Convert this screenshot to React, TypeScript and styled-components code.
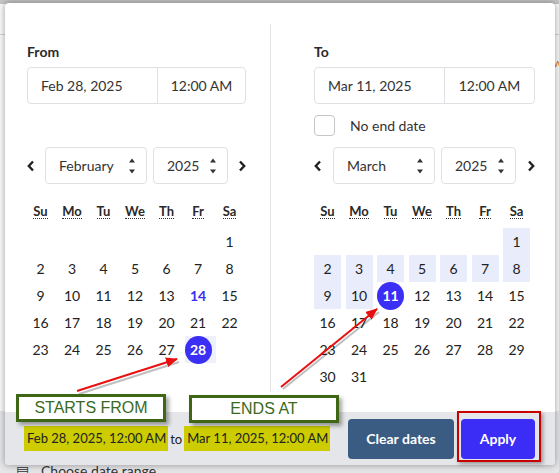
import { FC } from 'react';
import styled, { createGlobalStyle, css } from 'styled-components';

type DayKind = 'normal' | 'today' | 'range' | 'start' | 'end';

interface IcalendarProps {
  label: string;
  dateText: string;
  month: string;
  offset: number;
  days: number;
  kindOf: (day: number) => DayKind;
  showNoEnd?: boolean;
}

const GlobalStyle = createGlobalStyle`
  html, body {
    margin: 0;
    padding: 0;
  }
  body {
    font-family: Lato, "Noto Sans", sans-serif;
    color: #222;
    background: #f3f3f4;
  }
`;

const Screen = styled.div`
  position: relative;
  width: 559px;
  height: 473px;
  overflow: hidden;
  display: flex;
  flex-direction: column;
`;

/* page behind the popover */
const TopStrip = styled.div`
  height: 4px;
  background: #c5c5c8;
`;
const PageArea = styled.div`
  flex: 1;
  display: flex;
  flex-direction: column;
  background: #fbfbfb;
`;
const PageHeader = styled.div`
  height: 30px;
  border-bottom: 1px solid #d4d4d6;
`;
const PageRow = styled.div`
  flex: 1;
  padding: 20px 0 0 553px;
  color: #d47a1d;
  font-size: 12px;
`;
const PageFooter = styled.div`
  height: 62px;
  display: flex;
  align-items: flex-end;
  gap: 12px;
  padding: 0 0 0 16px;
  background: #e6e6e9;
  font-size: 14px;
  color: #333;
`;
const FieldText = styled.span`
  line-height: 14px;
  margin-bottom: -5px;
  white-space: nowrap;
`;

/* popover */
const Popover = styled.div`
  position: absolute;
  top: 3px;
  left: 5px;
  width: 550px;
  height: 462px;
  display: flex;
  flex-direction: column;
  background: #fff;
  border-radius: 4px;
  box-shadow: 0 0 6px 1px rgba(0, 0, 0, 0.3);
  overflow: hidden;
`;
const Columns = styled.div`
  display: flex;
  padding-top: 21px;
`;
const Column = styled.div<{ $first?: boolean }>`
  box-sizing: border-box;
  padding: 19px 20px 2px 43px;
  flex: 1;
  ${({ $first }) =>
    $first &&
    css`
      flex: 0 0 266px;
      padding: 19px 24px 2px 22px;
      border-right: 1px solid #e4e4e7;
    `}
`;
const FieldLabel = styled.div`
  font-size: 14px;
  font-weight: 700;
  line-height: 18px;
  margin-bottom: 6px;
  color: #2a2a2a;
`;
const InputGroup = styled.div`
  box-sizing: border-box;
  height: 37px;
  display: flex;
  border: 1px solid #dfe0e4;
  border-radius: 4px;
  font-size: 14px;
  color: #333;
`;
const DatePart = styled.div`
  flex: 0 0 130px;
  box-sizing: border-box;
  display: flex;
  align-items: center;
  padding-left: 13px;
  border-right: 1px solid #dfe0e4;
`;
const TimePart = styled.div`
  flex: 1;
  display: flex;
  align-items: center;
  justify-content: center;
`;
const CheckRow = styled.label<{ $placeholder?: boolean }>`
  height: 21px;
  margin-top: 11px;
  display: flex;
  align-items: center;
  gap: 15px;
  font-size: 14px;
  color: #333;
  visibility: ${({ $placeholder }) => ($placeholder ? 'hidden' : 'visible')};
`;
const CheckBox = styled.span`
  box-sizing: border-box;
  width: 21px;
  height: 21px;
  border: 1px solid #c4c5c9;
  border-radius: 4px;
`;
const NavRow = styled.div`
  height: 37px;
  margin-top: 11px;
  display: flex;
  align-items: stretch;
  gap: 6px;
`;
const NavButton = styled.button<{ $next?: boolean }>`
  flex: 1;
  display: flex;
  align-items: center;
  justify-content: ${({ $next }) => ($next ? 'flex-end' : 'flex-start')};
  padding: 0;
  margin: ${({ $next }) => ($next ? '0 0 0 -6px' : '0 -6px 0 0')};
  border: none;
  background: none;
  color: #222;
`;
const Select = styled.div<{ $wide?: boolean }>`
  box-sizing: border-box;
  width: ${({ $wide }) => ($wide ? '102px' : '75px')};
  display: flex;
  align-items: center;
  justify-content: space-between;
  padding: 0 10px 0 13px;
  border: 1px solid #dfe0e4;
  border-radius: 4px;
  font-size: 14px;
  color: #333;
`;
const Grid = styled.div`
  display: grid;
  grid-template-columns: repeat(7, 27px);
  grid-auto-rows: 27px;
  column-gap: 4.5px;
`;
const WeekGrid = styled(Grid)`
  margin: 14px 0 3px;
`;
const WeekCell = styled.div`
  display: flex;
  align-items: center;
  justify-content: center;
`;
const WeekAbbr = styled.abbr`
  font-size: 13px;
  font-weight: 700;
  line-height: 14px;
  color: #2a2a2a;
  text-decoration: none;
  border-bottom: 1px dotted #333;
`;
const Day = styled.div<{ $kind: DayKind }>`
  position: relative;
  display: flex;
  align-items: center;
  justify-content: center;
  font-size: 14px;
  color: #222;
  ${({ $kind }) => $kind === 'range' && css`background: #e9ecfb;`}
  ${({ $kind }) => $kind === 'today' && css`color: #3a2ff0; font-weight: 700;`}
  ${({ $kind }) =>
    $kind === 'start' &&
    css`
      &::before {
        content: '';
        position: absolute;
        top: 0;
        bottom: 0;
        left: 0;
        right: -4.5px;
        background: #eef0fc;
      }
    `}
`;
const DayCircle = styled.span`
  position: relative;
  width: 28px;
  height: 28px;
  border-radius: 50%;
  display: flex;
  align-items: center;
  justify-content: center;
  background: #3b2ff6;
  color: #fff;
  font-weight: 700;
`;

/* footer */
const Footer = styled.div`
  margin-top: auto;
  height: 53px;
  display: flex;
  align-items: center;
  padding: 0 20px 0 19px;
  background: #e5e6ea;
  font-size: 13px;
  color: #222;
  white-space: nowrap;
`;
const Marked = styled.span`
  flex-shrink: 0;
  background: #cccc00;
  padding: 4px 2px 4px 3px;
  line-height: 17px;
`;
const Joiner = styled.span`
  margin: 0 2px;
`;
const Actions = styled.div`
  margin-left: auto;
  display: flex;
  gap: 7px;
`;
const ActionButton = styled.button<{ $primary?: boolean }>`
  flex-shrink: 0;
  height: 40px;
  width: ${({ $primary }) => ($primary ? '74px' : '106px')};
  border: none;
  border-radius: 4px;
  background: ${({ $primary }) => ($primary ? '#3b2cf6' : '#3a5b82')};
  color: #fff;
  font-family: Lato, sans-serif;
  font-size: 14px;
  font-weight: 700;
`;

/* annotations drawn over the screenshot */
const Callout = styled.div<{ $left: number; $top: number }>`
  position: absolute;
  left: ${({ $left }) => $left}px;
  top: ${({ $top }) => $top}px;
  box-sizing: border-box;
  width: 150px;
  height: 28px;
  display: flex;
  align-items: center;
  justify-content: center;
  border: 3px solid #3f6614;
  background: #fff;
  box-shadow: 3px 3px 4px rgba(0, 0, 0, 0.35);
  font-family: "Liberation Sans", Arial, sans-serif;
  font-size: 16px;
  color: #3a6a1e;
`;
const ApplyFrame = styled.div`
  position: absolute;
  left: 457px;
  top: 411px;
  width: 84px;
  height: 51px;
  box-sizing: border-box;
  border: 2px solid #c80000;
  box-shadow: 2px 2px 4px rgba(0, 0, 0, 0.35);
`;
const Arrows = styled.svg`
  position: absolute;
  inset: 0;
  pointer-events: none;
`;

const Chevron: FC<{ next?: boolean }> = ({ next }) => (
  <svg width="8" height="12" viewBox="0 0 8 12">
    <path
      d={next ? 'M2 1.5 L6.2 6 L2 10.5' : 'M6 1.5 L1.8 6 L6 10.5'}
      fill="none"
      stroke="currentColor"
      strokeWidth="2.4"
    />
  </svg>
);

const Spinner = () => (
  <svg width="8" height="18" viewBox="0 0 8 18">
    <path d="M4 1.5 L7 5.5 L1 5.5 Z" fill="#333" />
    <path d="M4 16.5 L7 12.5 L1 12.5 Z" fill="#333" />
  </svg>
);

const WEEK = ['Su', 'Mo', 'Tu', 'We', 'Th', 'Fr', 'Sa'];
const WEEK_TITLES = ['Sunday', 'Monday', 'Tuesday', 'Wednesday', 'Thursday', 'Friday', 'Saturday'];

const Calendar: FC<IcalendarProps> = ({
  label,
  dateText,
  month,
  offset,
  days,
  kindOf,
  showNoEnd,
}) => {
  const cells = Array.from({ length: offset + days }, (_, i) => (i < offset ? 0 : i - offset + 1));
  return (
    <>
      <FieldLabel>{label}</FieldLabel>
      <InputGroup>
        <DatePart>{dateText}</DatePart>
        <TimePart>12:00 AM</TimePart>
      </InputGroup>
      {showNoEnd ? (
        <CheckRow>
          <CheckBox />
          No end date
        </CheckRow>
      ) : (
        <CheckRow $placeholder />
      )}
      <NavRow>
        <NavButton>
          <Chevron />
        </NavButton>
        <Select $wide>
          {month}
          <Spinner />
        </Select>
        <Select>
          2025
          <Spinner />
        </Select>
        <NavButton $next>
          <Chevron next />
        </NavButton>
      </NavRow>
      <WeekGrid>
        {WEEK.map((d, i) => (
          <WeekCell key={d}>
            <WeekAbbr title={WEEK_TITLES[i]}>{d}</WeekAbbr>
          </WeekCell>
        ))}
      </WeekGrid>
      <Grid>
        {cells.map((day, i) => {
          if (!day) return <div key={`e${i}`} />;
          const kind = kindOf(day);
          return (
            <Day key={day} $kind={kind}>
              {kind === 'start' || kind === 'end' ? <DayCircle>{day}</DayCircle> : day}
            </Day>
          );
        })}
      </Grid>
    </>
  );
};

const febKind = (d: number): DayKind => (d === 28 ? 'start' : d === 14 ? 'today' : 'normal');
const marKind = (d: number): DayKind => (d === 11 ? 'end' : d < 11 ? 'range' : 'normal');

const App: FC = () => {
  return (
    <Screen>
      <GlobalStyle />
      <TopStrip />
      <PageArea>
        <PageHeader />
        <PageRow>w</PageRow>
        <PageFooter>
          <FieldText>▤</FieldText>
          <FieldText>Choose date range...</FieldText>
        </PageFooter>
      </PageArea>

      <Popover>
        <Columns>
          <Column $first>
            <Calendar
              label="From"
              dateText="Feb 28, 2025"
              month="February"
              offset={6}
              days={28}
              kindOf={febKind}
            />
          </Column>
          <Column>
            <Calendar
              label="To"
              dateText="Mar 11, 2025"
              month="March"
              offset={6}
              days={31}
              kindOf={marKind}
              showNoEnd
            />
          </Column>
        </Columns>
        <Footer>
          <Marked>Feb 28, 2025, 12:00 AM</Marked>
          <Joiner>to</Joiner>
          <Marked>Mar 11, 2025, 12:00 AM</Marked>
          <Actions>
            <ActionButton>Clear dates</ActionButton>
            <ActionButton $primary>Apply</ActionButton>
          </Actions>
        </Footer>
      </Popover>

      <Arrows width="559" height="473" viewBox="0 0 559 473">
        <defs>
          <marker
            id="head"
            markerUnits="userSpaceOnUse"
            markerWidth="12"
            markerHeight="10"
            refX="11"
            refY="5"
            orient="auto"
          >
            <path d="M0 0 L12 5 L0 10 Z" fill="#e81010" />
          </marker>
        </defs>
        <line x1="79" y1="394" x2="179" y2="362" stroke="rgba(0,0,0,0.25)" strokeWidth="2" />
        <line x1="283" y1="389" x2="379" y2="312" stroke="rgba(0,0,0,0.25)" strokeWidth="2" />
        <line x1="77" y1="391" x2="177" y2="359" stroke="#e81010" strokeWidth="2" markerEnd="url(#head)" />
        <line x1="281" y1="387" x2="377" y2="309" stroke="#e81010" strokeWidth="2" markerEnd="url(#head)" />
      </Arrows>

      <Callout $left={16} $top={394}>STARTS FROM</Callout>
      <Callout $left={189} $top={395}>ENDS AT</Callout>
      <ApplyFrame />
    </Screen>
  );
};

export default App;
